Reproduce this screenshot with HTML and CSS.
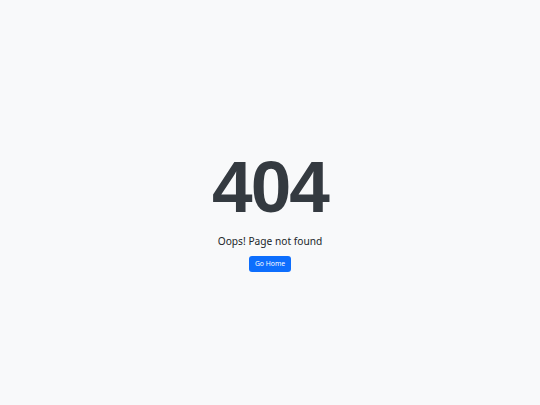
FILE: index.html
```html
<!DOCTYPE html>
<html lang="en">
<head>
<meta charset="utf-8">
<title>404</title>
<link rel="stylesheet" href="styles.css">
</head>
<body>
<main class="page">
  <div class="notfound">
    <h1 class="code">404</h1>
    <p class="message">Oops! Page not found</p>
    <a class="btn" href="#">Go Home</a>
  </div>
</main>
</body>
</html>
```

FILE: styles.css
```css
html, body {
  margin: 0;
  padding: 0;
  height: 100%;
}
body {
  background: #f8f9fa;
  color: #343a40;
  font-family: "Noto Sans", "Open Sans", sans-serif;
}
.page {
  height: 100%;
  display: flex;
  align-items: center;
  justify-content: center;
}
.notfound {
  display: flex;
  flex-direction: column;
  align-items: center;
  padding-top: 10px;
}
.code {
  margin: 0;
  font-family: "Liberation Sans", Arial, sans-serif;
  font-weight: 700;
  font-size: 73px;
  line-height: 88px;
  letter-spacing: -2px;
  color: #343a40;
}
.message {
  margin: 3px 0 8px;
  font-size: 10.2px;
  line-height: 14px;
  color: #212529;
}
.btn {
  display: inline-block;
  background: #0d6efd;
  color: #fff;
  text-decoration: none;
  font-size: 6.8px;
  line-height: 16px;
  padding: 0 6px;
  border-radius: 3px;
}
```
